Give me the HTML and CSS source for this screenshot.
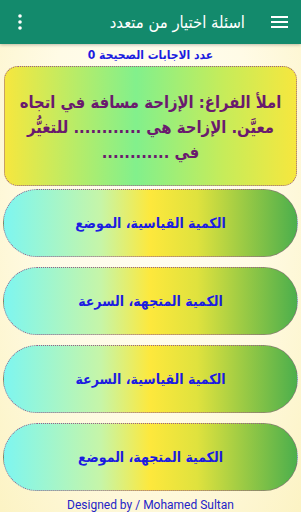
FILE: index.html
```html
<!DOCTYPE html>
<html lang="ar" dir="rtl">
<head>
  <meta charset="UTF-8" />
  <meta name="viewport" content="width=device-width, initial-scale=1.0"/>
  <title>اسئلة اختيار من متعدد</title>
  <link rel="stylesheet" href="styles.css">
</head>
<body>
  <header class="appbar">
    <div class="menu-btn">
      <svg width="18" height="14" viewBox="0 0 18 14">
        <rect x="0" y="1" width="17" height="2" fill="#fff"/>
        <rect x="0" y="6" width="17" height="2" fill="#fff"/>
        <rect x="0" y="11" width="17" height="2" fill="#fff"/>
      </svg>
    </div>
    <h1 class="title">اسئلة اختيار من متعدد</h1>
    <div class="more-btn">
      <svg width="4" height="16" viewBox="0 0 4 16">
        <circle cx="2" cy="2" r="1.8" fill="#fff"/>
        <circle cx="2" cy="8" r="1.8" fill="#fff"/>
        <circle cx="2" cy="14" r="1.8" fill="#fff"/>
      </svg>
    </div>
  </header>

  <main class="content">
    <div class="score">عدد الاجابات الصحيحة 0</div>

    <div class="question">
      <p>املأ الفراغ: الإزاحة مسافة في اتجاه<br>معيَّن. الإزاحة هي ............ للتغيُّر<br>في ............</p>
    </div>

    <div class="answers">
      <button class="answer">الكمية القياسية، الموضع</button>
      <button class="answer">الكمية المتجهة، السرعة</button>
      <button class="answer">الكمية القياسية، السرعة</button>
      <button class="answer">الكمية المتجهة، الموضع</button>
    </div>

    <footer class="credit" dir="ltr">Designed by / Mohamed Sultan</footer>
  </main>
</body>
</html>
```

FILE: styles.css
```css
:root {
  --color-bar: #138a6c;
  --color-question: #6a1a6e;
  --color-answer: #1c1ce0;
  --color-border: #9a5a8a;
  --font: 'DejaVu Sans Condensed', 'DejaVu Sans', sans-serif;
}
* {
  box-sizing: border-box;
}
html, body {
  height: 100%;
}
body {
  margin: 0;
  font-family: var(--font);
  background: radial-gradient(ellipse at 50% 35%, #fffef4 0%, #fffbe6 50%, #fcf3c4 100%);
  overflow: hidden;
}
.appbar {
  height: 44px;
  background-color: var(--color-bar);
  display: flex;
  align-items: center;
  padding: 0 12px 0 14px;
  box-shadow: 0 1px 3px rgba(0,0,0,0.25);
}
.menu-btn {
  width: 18px;
  display: flex;
  margin-left: 26px;
}
.title {
  flex: 1;
  margin: 0;
  font-size: 16.5px;
  font-weight: normal;
  color: #fff;
  text-align: right;
}
.more-btn {
  display: flex;
  padding-left: 4px;
}
.content {
  padding: 0 3px;
}
.score {
  text-align: center;
  font-size: 12px;
  font-weight: bold;
  color: var(--color-answer);
  height: 22px;
  line-height: 18px;
  padding-top: 2px;
}
.question {
  height: 120px;
  margin: 0 1px;
  border: 1.5px dotted var(--color-border);
  border-radius: 14px;
  background: linear-gradient(to right, #f6e73e 0%, #82f08c 45%, #c6ec5a 75%, #f6e73e 100%);
  color: var(--color-question);
  display: flex;
  align-items: center;
  justify-content: center;
  padding: 2px 6px 0;
}
.question p {
  margin: 0;
  font-size: 16.5px;
  font-weight: bold;
  line-height: 25px;
  text-align: center;
  white-space: nowrap;
}
.answers {
  display: flex;
  flex-direction: column;
  gap: 10px;
  margin-top: 3px;
}
.answer {
  height: 68px;
  width: 100%;
  border: 1.5px dotted var(--color-border);
  border-radius: 34px;
  background: linear-gradient(to right, #7ef6f0 0%, #c6f5a8 33%, #fde83c 50%, #dfe23e 66%, #4caf4c 100%);
  color: var(--color-answer);
  font-family: var(--font);
  font-size: 14px;
  font-weight: bold;
  cursor: pointer;
}
.credit {
  text-align: center;
  font-family: Roboto, sans-serif;
  font-size: 12px;
  color: #2424c8;
  margin-top: 7px;
}
```
